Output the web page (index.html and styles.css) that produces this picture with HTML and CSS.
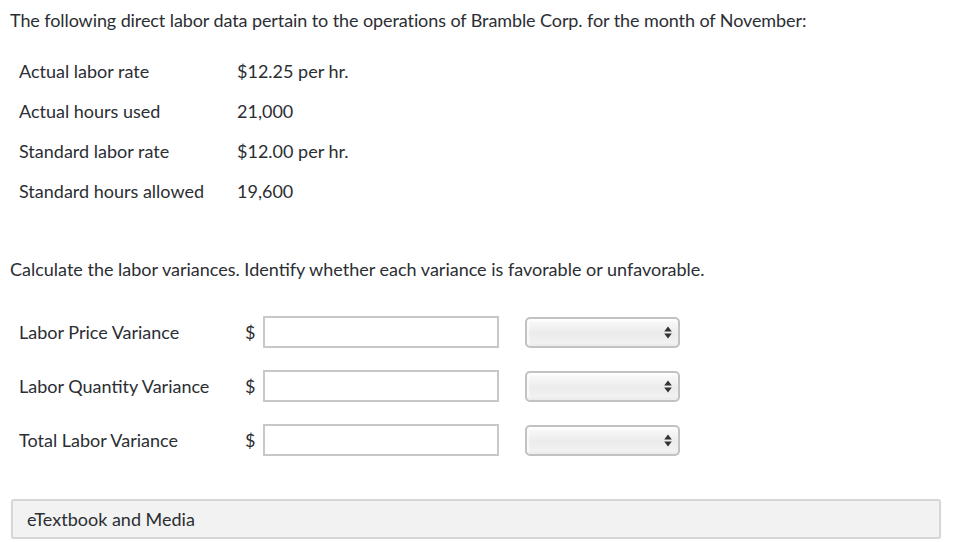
FILE: index.html
```html
<!DOCTYPE html>
<html>
<head>
<meta charset="utf-8">
<link rel="stylesheet" href="styles.css">
</head>
<body>
<p class="intro">The following direct labor data pertain to the operations of Bramble Corp. for the month of November:</p>
<table class="data">
  <tr><td class="lbl">Actual labor rate</td><td>$12.25 per hr.</td></tr>
  <tr><td class="lbl">Actual hours used</td><td>21,000</td></tr>
  <tr><td class="lbl">Standard labor rate</td><td>$12.00 per hr.</td></tr>
  <tr><td class="lbl">Standard hours allowed</td><td>19,600</td></tr>
</table>
<p class="question">Calculate the labor variances. Identify whether each variance is favorable or unfavorable.</p>
<div class="variances">
  <div class="vrow">
    <span class="vlabel">Labor Price Variance</span>
    <span class="cur">$</span>
    <span class="input"></span>
    <span class="select"><svg class="arrows" width="8" height="13" viewBox="0 0 8 13"><path d="M4 0.5 L7.8 5.5 L0.2 5.5 Z M0.2 7.5 L7.8 7.5 L4 12.5 Z" fill="#333"/></svg></span>
  </div>
  <div class="vrow">
    <span class="vlabel">Labor Quantity Variance</span>
    <span class="cur">$</span>
    <span class="input"></span>
    <span class="select"><svg class="arrows" width="8" height="13" viewBox="0 0 8 13"><path d="M4 0.5 L7.8 5.5 L0.2 5.5 Z M0.2 7.5 L7.8 7.5 L4 12.5 Z" fill="#333"/></svg></span>
  </div>
  <div class="vrow">
    <span class="vlabel">Total Labor Variance</span>
    <span class="cur">$</span>
    <span class="input"></span>
    <span class="select"><svg class="arrows" width="8" height="13" viewBox="0 0 8 13"><path d="M4 0.5 L7.8 5.5 L0.2 5.5 Z M0.2 7.5 L7.8 7.5 L4 12.5 Z" fill="#333"/></svg></span>
  </div>
</div>
<div class="media">eTextbook and Media</div>
</body>
</html>
```
FILE: styles.css
```css
html, body {
  margin: 0;
  padding: 0;
  background: #fff;
}
body {
  font-family: Lato, "Liberation Sans", sans-serif;
  font-size: 18px;
  color: #2b2e33;
  padding: 8px 13px 0 10px;
}
p {
  margin: 0;
  line-height: 24px;
}
.intro {
  letter-spacing: -0.09px;
}
.data {
  border-collapse: collapse;
  margin: 19px 0 0 9px;
}
.data td {
  height: 40px;
  padding: 0;
  vertical-align: middle;
}
.data td.lbl {
  width: 218px;
}
.question {
  margin-top: 46px;
}
.variances {
  margin-top: 24px;
  display: flex;
  flex-direction: column;
}
.vrow {
  height: 54px;
  display: flex;
  align-items: center;
  padding-left: 9px;
}
.vlabel {
  width: 226px;
}
.cur {
  width: 18px;
}
.input {
  width: 232px;
  height: 28px;
  border: 2px solid #c8c8c8;
  background: #fff;
  box-sizing: content-box;
}
.select {
  margin-left: 26px;
  width: 151px;
  height: 27px;
  border: 2px solid #c2c2c2;
  border-radius: 5px;
  background: linear-gradient(#fbfbfb, #ebebeb 55%, #f4f4f4);
  box-shadow: inset 0 2px 2px rgba(255,255,255,0.95), inset 0 -2px 2px rgba(0,0,0,0.04), inset 2px 0 2px rgba(255,255,255,0.8);
  display: flex;
  align-items: center;
  justify-content: flex-end;
}
.arrows {
  margin-right: 6px;
}
.media {
  margin-top: 32px;
  margin-left: 1px;
  height: 36px;
  line-height: 36px;
  border: 2px solid #d6d6d6;
  border-radius: 3px;
  background: #f2f2f2;
  padding-left: 14px;
  box-shadow: 0 1px 1px rgba(0,0,0,0.08);
}
```
